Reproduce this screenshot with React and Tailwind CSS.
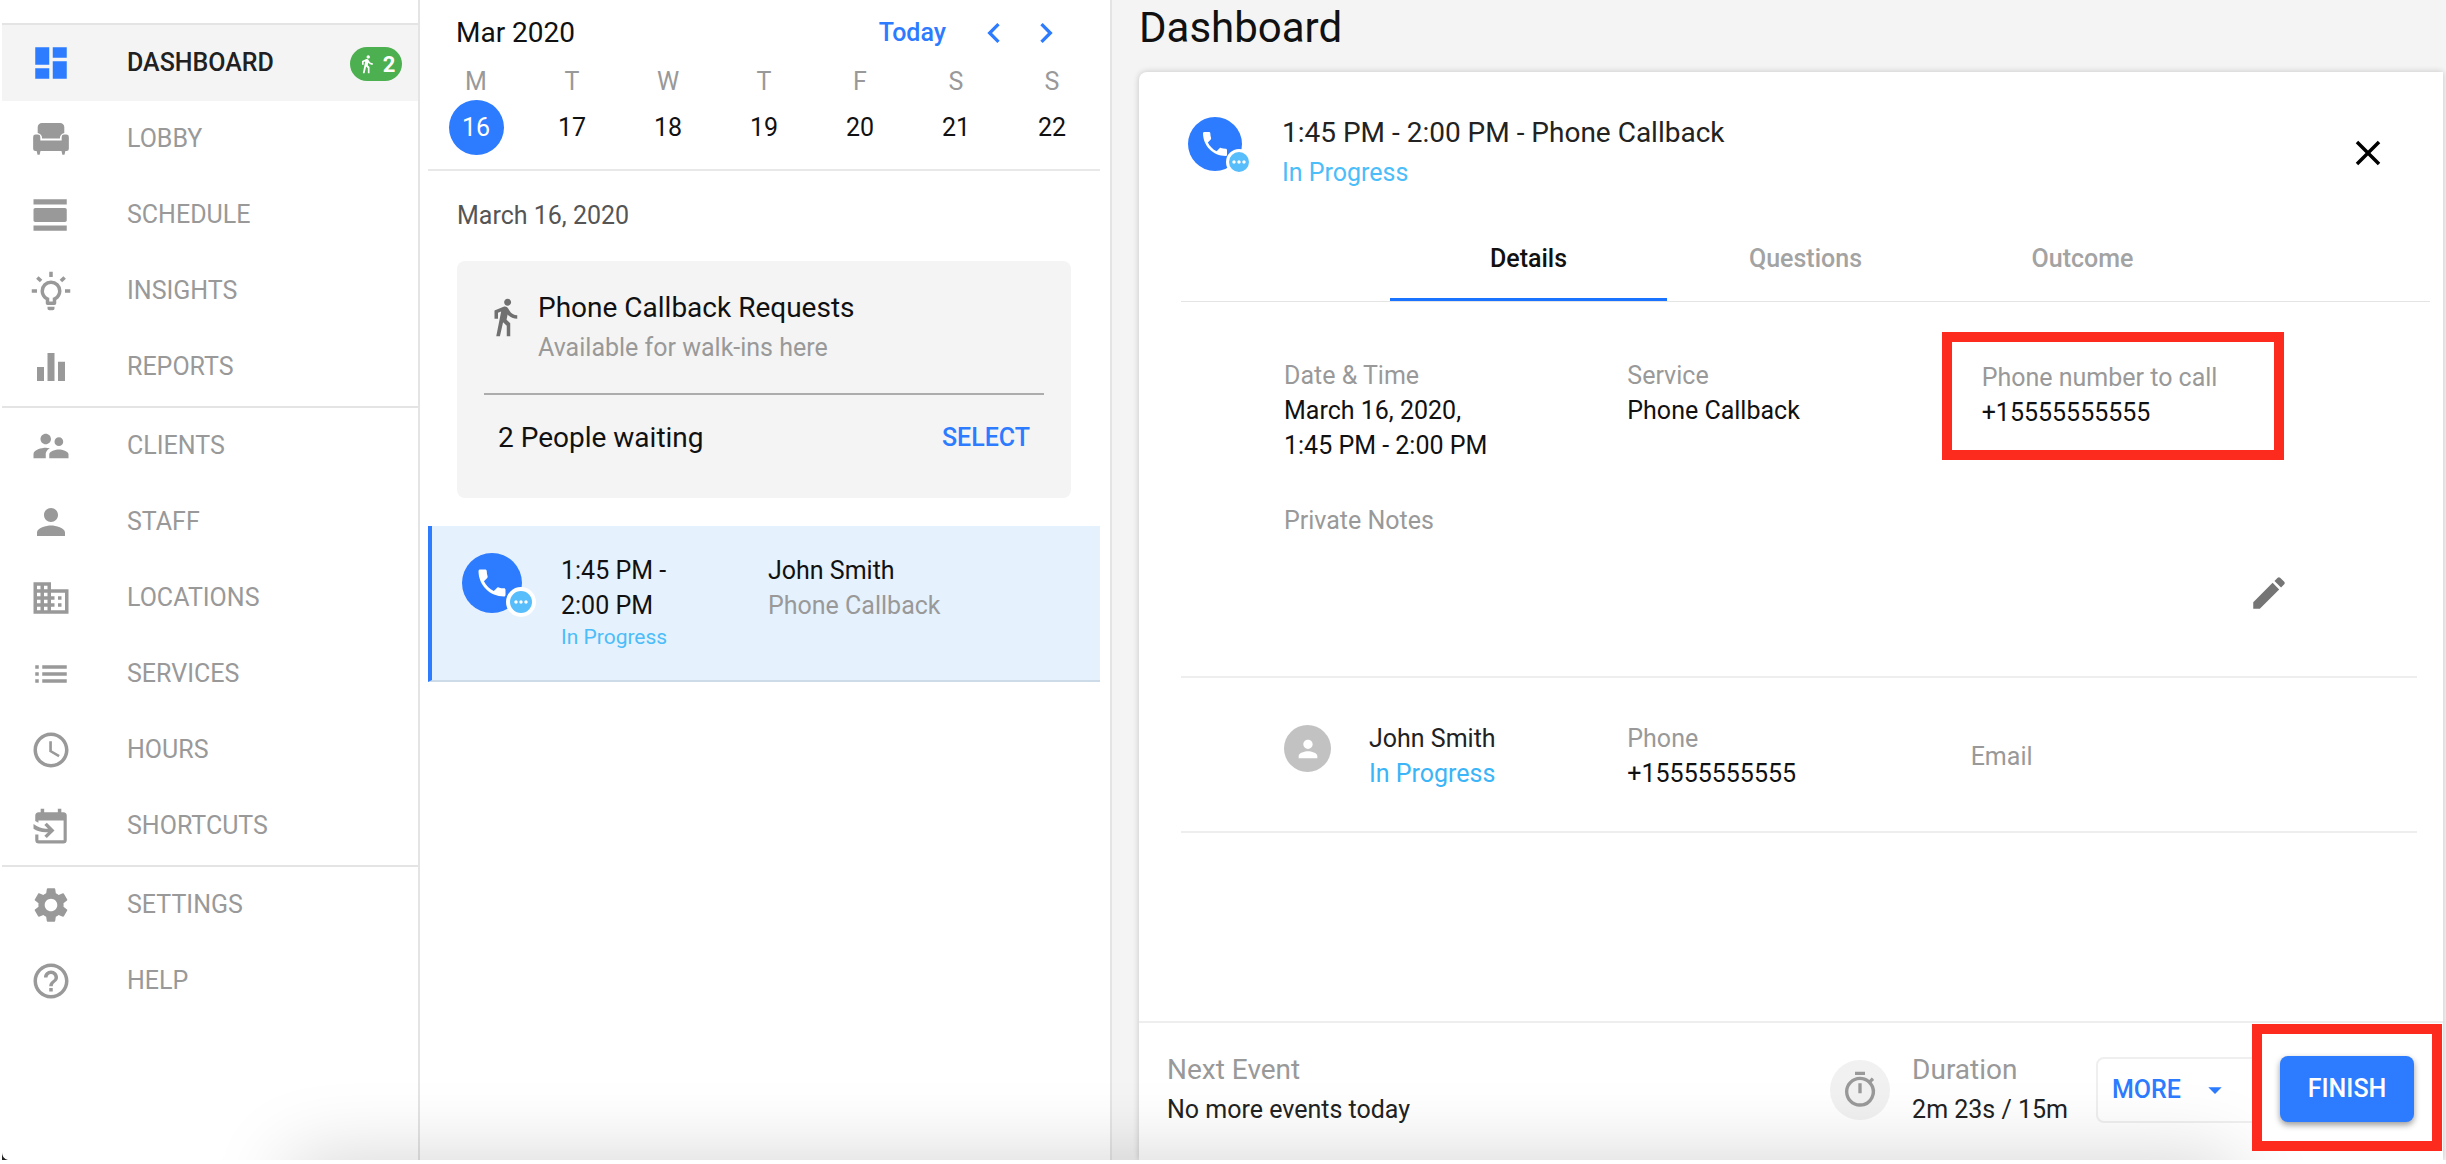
import React, { useState } from "react";
import {
  MdAccessTime,
  MdArrowDropDown,
  MdBusiness,
  MdChevronLeft,
  MdChevronRight,
  MdClose,
  MdDashboard,
  MdDirectionsWalk,
  MdEdit,
  MdEqualizer,
  MdHelpOutline,
  MdList,
  MdMoreHoriz,
  MdOutlineTimer,
  MdPerson,
  MdPhone,
  MdSettings,
  MdSupervisorAccount,
  MdViewDay,
} from "react-icons/md";
import clsx from "clsx";

const ArmchairIcon = ({ className }) => (
  <svg viewBox="0 0 24 24" fill="currentColor" className={className}>
    <path d="M6.8 2.9h10.4a2.4 2.4 0 0 1 2.4 2.4v3.2a3.2 3.2 0 0 0-2.5 3.2H6.900a3.2 3.2 0 0 0-2.5-3.2V5.3a2.4 2.4 0 0 1 2.4-2.4z" />
    <path d="M3.2 9.400h1.3a1.4 1.4 0 0 1 1.4 1.4v2.1h12.2v-2.1a1.4 1.4 0 0 1 1.4-1.4h1.3a1.4 1.4 0 0 1 1.4 1.4v6.8a1.3 1.3 0 0 1-1.3 1.3h-.7L19.7 21h-1.2L18 18.9H6L5.5 21H4.3l-.5-2.1h-.7a1.3 1.3 0 0 1-1.3-1.3v-6.8a1.4 1.4 0 0 1 1.4-1.4z" />
  </svg>
);

const LightbulbIcon = ({ className }) => (
  <svg viewBox="0 0 24 24" fill="currentColor" className={className}>
    <path d="M20,11H23V13H20V11M1,11H4V13H1V11M13,1V4H11V1H13M4.92,3.5L7.05,5.64L5.63,7.05L3.5,4.93L4.92,3.5M16.95,5.63L19.07,3.5L20.5,4.93L18.37,7.05L16.95,5.63M12,6A6,6 0 0,1 18,12C18,14.22 16.79,16.16 15,17.2V19A1,1 0 0,1 14,20H10A1,1 0 0,1 9,19V17.2C7.21,16.16 6,14.22 6,12A6,6 0 0,1 12,6M14,21V22A1,1 0 0,1 13,23H11A1,1 0 0,1 10,22V21H14M11,18H13V15.87C14.73,15.43 16,13.86 16,12A4,4 0 0,0 12,8A4,4 0 0,0 8,12C8,13.86 9.27,15.43 11,15.87V18Z" />
  </svg>
);

const CalendarImportIcon = ({ className }) => (
  <svg viewBox="0 0 24 24" fill="currentColor" className={className}>
    <path d="M6.1 2.2h2v2h7.8v-2h2v2H19a2 2 0 0 1 2 2V20a2 2 0 0 1-2 2H5a2 2 0 0 1-2-2v-3.2h1.8v3.4h14.4V8.9H4.8v1.3L3 9.2v-3a2 2 0 0 1 2-2h1.1z" />
    <path d="M2 10.8c2 1.6 4.4 2.5 7 2.7h1.3L8.2 11.4l1.4-1.3 4.4 4.4-4.4 4.4-1.4-1.3 2.1-2.1H9c-2.8-.1-5.2-.8-7-2z" />
  </svg>
);

const navSections = [
  [
    { label: "DASHBOARD", icon: MdDashboard, badge: 2 },
    { label: "LOBBY", icon: ArmchairIcon },
    { label: "SCHEDULE", icon: MdViewDay },
    { label: "INSIGHTS", icon: LightbulbIcon },
    { label: "REPORTS", icon: MdEqualizer },
  ],
  [
    { label: "CLIENTS", icon: MdSupervisorAccount },
    { label: "STAFF", icon: MdPerson },
    { label: "LOCATIONS", icon: MdBusiness },
    { label: "SERVICES", icon: MdList },
    { label: "HOURS", icon: MdAccessTime },
    { label: "SHORTCUTS", icon: CalendarImportIcon },
  ],
  [
    { label: "SETTINGS", icon: MdSettings },
    { label: "HELP", icon: MdHelpOutline },
  ],
];

const days = [
  { letter: "M", date: 16 },
  { letter: "T", date: 17 },
  { letter: "W", date: 18 },
  { letter: "T", date: 19 },
  { letter: "F", date: 20 },
  { letter: "S", date: 21 },
  { letter: "S", date: 22 },
];

const Sidebar = () => (
  <nav className="w-[420px] shrink-0 border-r-2 border-[#e4e4e4] pt-[23px] pl-0.5">
    {navSections.map((section, i) => (
      <ul key={i} className="border-t-2 border-[#e4e4e4] pb-px">
        {section.map(({ label, icon: Icon, badge }) => {
          const active = label === "DASHBOARD";
          return (
            <li key={label}>
              <a
                href="#"
                className={clsx(
                  "flex h-19 items-center pr-4 pl-7",
                  active ? "bg-[#f4f4f4] font-medium text-[#212121]" : "text-[#999]",
                )}
              >
                <Icon className={clsx("size-[42px]", active && "text-[#2d7bff]")} />
                <span className="ml-[55px]">{label}</span>
                {badge && (
                  <span className="mt-0.5 ml-auto flex h-[34px] w-[52px] items-center justify-center gap-1.5 rounded-full bg-[#4caf50] text-[22px] font-bold text-white">
                    <MdDirectionsWalk className="size-5" />
                    {badge}
                  </span>
                )}
              </a>
            </li>
          );
        })}
      </ul>
    ))}
  </nav>
);

// Icono de llamada con el indicador "en progreso"
const CallBadge = ({ large }) => (
  <div
    className={clsx(
      "relative flex shrink-0 items-center justify-center rounded-full bg-[#2d7bff] text-white",
      large ? "size-[60px]" : "size-[54px]",
    )}
  >
    <MdPhone className={large ? "size-9" : "size-8"} />
    <span
      className={clsx(
        "absolute flex items-center justify-center rounded-full border-white bg-[#58bdfb]",
        large
          ? "-right-3.5 -bottom-1 size-[30px] border-4"
          : "-right-2.5 -bottom-1 size-[26px] border-3",
      )}
    >
      <MdMoreHoriz className="size-5" />
    </span>
  </div>
);

const AgendaPanel = () => {
  const [selected, setSelected] = useState(16);

  return (
    <section className="w-[692px] shrink-0 border-r-2 border-[#e4e4e4] pr-2.5 pl-2">
      <header className="border-b-2 border-[#e8e8e8] pt-[13px] pb-3.5">
        <div className="flex h-10 items-center pr-[34px] pl-7">
          <h2 className="mr-auto text-[28px] text-[#111]">Mar 2020</h2>
          <button className="mr-7 font-medium text-[#2d7bff]">Today</button>
          <button aria-label="Previous week" className="text-[#2d7bff]">
            <MdChevronLeft className="size-10" />
          </button>
          <button aria-label="Next week" className="ml-3 text-[#2d7bff]">
            <MdChevronRight className="size-10" />
          </button>
        </div>
        <div className="mt-[11px] grid grid-cols-7">
          {days.map(({ letter, date }) => (
            <div key={date} className="flex flex-col items-center">
              <span className="leading-9 text-[#999]">{letter}</span>
              <button
                onClick={() => setSelected(date)}
                className={clsx(
                  "size-[55px] rounded-full",
                  selected === date ? "bg-[#2d7bff] text-white" : "text-[#111]",
                )}
              >
                {date}
              </button>
            </div>
          ))}
        </div>
      </header>

      <div className="px-[29px]">
        <h3 className="my-[29px] leading-8 text-[#555]">March 16, 2020</h3>

        <div className="rounded-lg bg-[#f4f4f4] px-[27px] pt-[29px] pb-[17px]">
          <div className="flex pb-[23px]">
            <MdDirectionsWalk className="mt-1.5 mr-3 size-[42px] text-[#707070]" />
            <div>
              <h4 className="text-[28px] leading-9 text-[#111]">Phone Callback Requests</h4>
              <p className="leading-11 text-[#999]">Available for walk-ins here</p>
            </div>
          </div>
          <div className="flex h-22 items-center justify-between border-t-2 border-[#acacac] px-3.5">
            <span className="text-[28px] text-[#111]">2 People waiting</span>
            <button className="font-medium text-[#2d7bff]">SELECT</button>
          </div>
        </div>
      </div>

      <article className="mt-7 flex border-b-2 border-l-4 border-b-[#cddbe9] border-l-[#2d7bff] bg-[#e5f1fd] pt-[27px] pb-[29px] pl-[30px]">
        <CallBadge large />
        <div className="ml-[39px] w-[207px] leading-[35px] text-[#111]">
          <p>1:45 PM -</p>
          <p>2:00 PM</p>
          <p className="text-[21px] leading-7 text-[#4bbdf9]">In Progress</p>
        </div>
        <div className="leading-[35px]">
          <p className="text-[#111]">John Smith</p>
          <p className="text-[#999]">Phone Callback</p>
        </div>
      </article>
    </section>
  );
};

const Field = ({ label, children }) => (
  <dl className="leading-[35px]">
    <dt className="text-[#999]">{label}</dt>
    <dd className="text-[#111]">{children}</dd>
  </dl>
);

const tabs = ["Details", "Questions", "Outcome"];

const EventPanel = () => {
  const [activeTab, setActiveTab] = useState("Details");

  return (
    <main className="flex min-w-0 flex-1 flex-col overflow-hidden bg-[#f4f4f4] pt-1 pr-[3px] pl-[27px]">
      <h1 className="mb-5 text-[42px] leading-12 text-[#111]">Dashboard</h1>

      <div className="flex flex-1 flex-col rounded-tl-lg bg-white shadow-[0_0_6px_rgba(0,0,0,0.2)]">
        <header className="flex pt-[41px] pr-[54px] pl-[49px]">
          <div className="mt-1">
            <CallBadge />
          </div>
          <div className="mr-auto ml-10 leading-10">
            <h2 className="text-[28px] leading-10 text-[#222]">
              1:45 PM - 2:00 PM - Phone Callback
            </h2>
            <p className="text-[#4bbdf9]">In Progress</p>
          </div>
          <button aria-label="Close">
            <MdClose className="size-[42px]" />
          </button>
        </header>

        <div
          role="tablist"
          className="mt-[25px] mr-[13px] ml-[42px] flex justify-center border-b border-[#e4e4e4]"
        >
          {tabs.map((tab) => (
            <button
              key={tab}
              role="tab"
              aria-selected={activeTab === tab}
              onClick={() => setActiveTab(tab)}
              className={clsx(
                "h-[83px] w-[277px] border-b-3 pt-0.5 font-medium",
                activeTab === tab
                  ? "border-[#1a73ff] text-[#111]"
                  : "border-transparent text-[#a3a3a3]",
              )}
            >
              {tab}
            </button>
          ))}
        </div>

        <section className="mr-[26px] ml-[42px] border-b-2 border-[#eee] px-[103px] pt-14 pb-[62px]">
          <div className="grid grid-cols-3 items-start">
            <Field label="Date & Time">
              March 16, 2020,
              <br />
              1:45 PM - 2:00 PM
            </Field>
            <Field label="Service">Phone Callback</Field>
            <div className="-mt-[26px] mr-[30px] -ml-[29px] border-10 border-[#fd2a1e] pt-[18px] pb-5 pl-[30px]">
              <Field label="Phone number to call">+15555555555</Field>
            </div>
          </div>
          <p className="mt-10 leading-[35px] text-[#999]">Private Notes</p>
          <div className="mt-[34px] mr-6 flex justify-end">
            <button aria-label="Edit notes">
              <MdEdit className="size-[42px] text-[#757575]" />
            </button>
          </div>
        </section>

        <section className="mr-[26px] ml-[42px] grid grid-cols-3 items-center border-b-2 border-[#eee] px-[103px] pt-[43px] pb-10">
          <div className="flex items-start">
            <span className="mt-1 mr-[38px] flex size-[47px] items-center justify-center rounded-full bg-[#c2c2c2] text-white">
              <MdPerson className="size-7" />
            </span>
            <div className="leading-[35px]">
              <p className="text-[#222]">John Smith</p>
              <p className="text-[#3bb4f8]">In Progress</p>
            </div>
          </div>
          <Field label="Phone">+15555555555</Field>
          <Field label="Email" />
        </section>

        <footer className="mt-auto flex items-center border-t-2 border-[#eee] pb-1 pl-7">
          <div className="mr-auto leading-10">
            <p className="text-[28px] leading-10 text-[#999]">Next Event</p>
            <p className="text-[#222]">No more events today</p>
          </div>
          <span className="flex size-[60px] items-center justify-center rounded-full bg-[#f1f1f1]">
            <MdOutlineTimer className="size-10 text-[#999]" />
          </span>
          <div className="ml-[22px] leading-10">
            <p className="text-[28px] leading-10 text-[#999]">Duration</p>
            <p className="text-[#222]">2m 23s / 15m</p>
          </div>
          <button className="-mr-2 ml-7 flex h-[66px] w-[164px] items-center rounded-lg border-2 border-[#efefef] bg-white pl-3.5 font-medium text-[#2d7bff]">
            MORE
            <MdArrowDropDown className="ml-[18px] size-8" />
          </button>
          <div className="relative z-20 mt-px mr-px mb-[5px] border-10 border-[#fd2a1e] bg-white px-[18px] pt-[22px] pb-[19px]">
            <button className="h-[66px] w-[134px] rounded-lg bg-[#2d7bff] font-medium text-white shadow-[0_3px_6px_rgba(0,0,0,0.4)]">
              FINISH
            </button>
          </div>
        </footer>
      </div>
    </main>
  );
};

const App = () => (
  <div className="relative flex min-h-screen overflow-hidden bg-white pb-1 font-['Roboto',sans-serif] text-[25px]">
    <Sidebar />
    <AgendaPanel />
    <EventPanel />

    {/* Sombra difusa del borde inferior */}
    <div className="pointer-events-none absolute inset-x-0 bottom-1 z-10 h-40 overflow-hidden">
      <div className="absolute top-full right-[210px] left-[290px] h-20 shadow-[0_0_80px_rgba(0,0,0,0.18)]" />
      <svg viewBox="0 0 6 8" className="absolute bottom-0 left-0.5 h-2 w-1.5">
        <path d="M0 0C0 4 2 7 6 8H0z" fill="#222" />
      </svg>
    </div>
  </div>
);

export default App;
